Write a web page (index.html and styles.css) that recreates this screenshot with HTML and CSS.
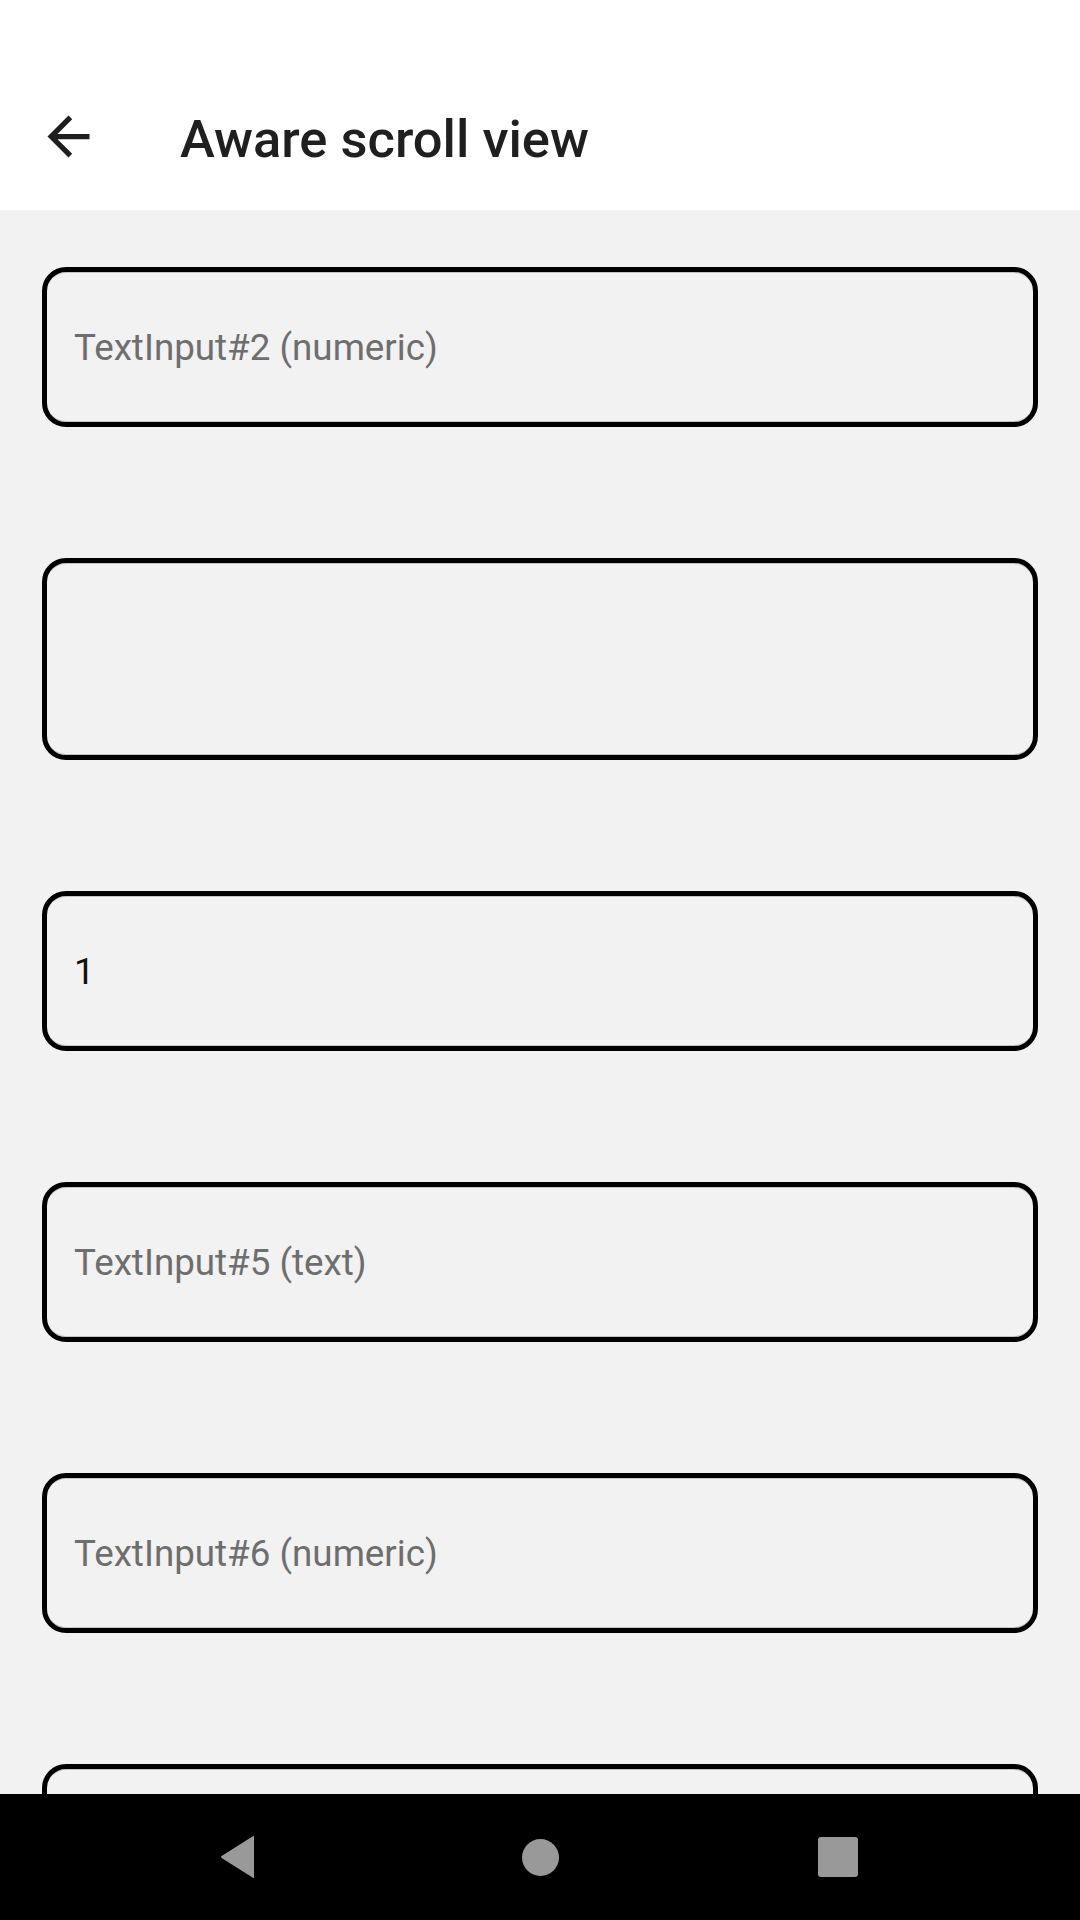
FILE: index.html
```html
<!DOCTYPE html>
<html>
<head>
<meta charset="utf-8">
<link rel="stylesheet" href="styles.css">
</head>
<body>
<div class="screen">
  <header class="appbar">
    <div class="toolbar">
      <svg class="back" viewBox="0 0 24 24" width="63" height="63"><path d="M20 11H7.83l5.59-5.59L12 4l-8 8 8 8 1.41-1.41L7.83 13H20v-2z" fill="#1f1f1f"/></svg>
      <h1 class="title">Aware scroll view</h1>
    </div>
  </header>
  <main class="content">
    <div class="field"><span class="placeholder">TextInput#2 (numeric)</span></div>
    <div class="field tall"></div>
    <div class="field"><span class="value">1</span></div>
    <div class="field"><span class="placeholder">TextInput#5 (text)</span></div>
    <div class="field"><span class="placeholder">TextInput#6 (numeric)</span></div>
    <div class="field"></div>
  </main>
  <nav class="navbar">
    <svg class="nav-back" width="40" height="44" viewBox="0 0 40 44"><path d="M36 2 L36 42 Q36 44 34.5 42.6 L4 23.2 Q2 22 4 20.8 L34.5 1.4 Q36 0 36 2 Z" fill="#999"/></svg>
    <span class="nav-home"></span>
    <span class="nav-recent"></span>
  </nav>
</div>
</body>
</html>
```
FILE: styles.css
```css
html, body {
  margin: 0;
  padding: 0;
}
body {
  font-family: Roboto, "Noto Sans", "Liberation Sans", sans-serif;
  background: #f2f2f2;
}
.screen {
  width: 1080px;
  height: 1920px;
  display: flex;
  flex-direction: column;
  overflow: hidden;
}
.appbar {
  background: #ffffff;
  height: 210px;
  padding-top: 63px;
  box-sizing: border-box;
  flex: none;
}
.toolbar {
  height: 147px;
  display: flex;
  align-items: center;
  padding-left: 37px;
}
.back {
  flex: none;
  display: block;
}
.title {
  margin: 0 0 0 80px;
  font-size: 52.5px;
  font-weight: 500;
  color: #1f1f1f;
  letter-spacing: 0;
  position: relative;
  top: 2px;
}
.content {
  flex: 1;
  overflow: hidden;
  padding: 57px 42px 0;
  display: flex;
  flex-direction: column;
  gap: 131px;
}
.field {
  flex: none;
  height: 160px;
  box-sizing: border-box;
  border: 5px solid #000;
  border-radius: 24px;
  display: flex;
  align-items: center;
  padding-left: 27px;
  box-shadow: inset 0 1px 0 #c4c4c4, inset 0 -1px 0 #c4c4c4;
  font-size: 36.75px;
}
.field.tall {
  height: 202px;
}
.placeholder {
  color: #6e6e6e;
}
.value {
  color: #111;
}
.navbar {
  flex: none;
  height: 126px;
  background: #000;
  position: relative;
}
.nav-back {
  position: absolute;
  left: 218px;
  top: 41px;
}
.nav-home {
  position: absolute;
  left: 522px;
  top: 45px;
  width: 37px;
  height: 37px;
  border-radius: 50%;
  background: #999;
}
.nav-recent {
  position: absolute;
  left: 818px;
  top: 43px;
  width: 40px;
  height: 40px;
  border-radius: 3px;
  background: #999;
}
```
